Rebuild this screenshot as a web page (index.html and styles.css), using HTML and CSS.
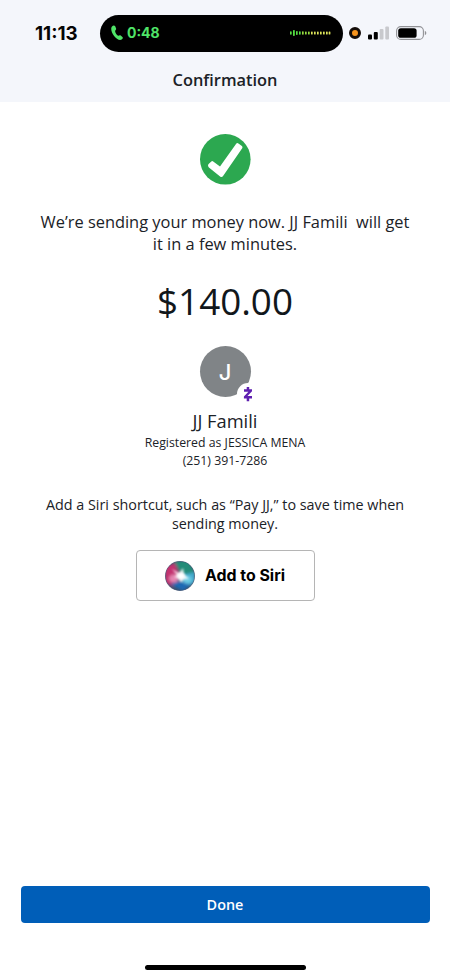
FILE: index.html
```html
<!DOCTYPE html>
<html lang="en">
<head>
<meta charset="utf-8">
<title>Confirmation</title>
<link rel="stylesheet" href="styles.css">
</head>
<body>
<header class="header">
  <div class="status">
    <span class="clock">11:13</span>
    <div class="island">
      <svg class="phone" width="12" height="16" viewBox="0 0 12 16"><path d="M1 1.4C2 .2 3.6.1 4.2 1.3L5.1 3.6C5.4 4.7 4.3 5.1 4.1 5.9C4.1 7.6 5.6 9.9 7.2 10.7C8 10.8 8.5 9.9 9.4 10.3L11.4 11.9C12.3 12.8 11.7 13.8 10.7 14.6C8.6 16 5.2 13.9 3.1 11.1C.7 8-.8 3.4 1 1.4Z"/></svg>
      <span class="duration">0:48</span>
      <svg class="wave" width="41" height="8" viewBox="0 0 41 8">
        <g fill="#55df42"><rect x="0" y="2.3" width="1.7" height="3.4" rx=".7"/><rect x="3" y="1" width="1.8" height="6" rx=".7"/><rect x="6" y="2" width="1.7" height="4" rx=".7"/><rect x="9" y="2.2" width="1.7" height="3.6" rx=".7"/></g>
        <g fill="#96dc40"><rect x="12" y="2.2" width="1.7" height="3.6" rx=".7"/><rect x="15" y="2.4" width="1.7" height="3.2" rx=".7"/><rect x="18" y="2.4" width="1.7" height="3.2" rx=".7"/></g>
        <g fill="#dce25a"><rect x="21" y="2.4" width="1.7" height="3.2" rx=".7"/><rect x="24" y="2.4" width="1.7" height="3.2" rx=".7"/><rect x="27" y="2.4" width="1.7" height="3.2" rx=".7"/><rect x="30" y="2.4" width="1.7" height="3.2" rx=".7"/><rect x="33" y="2.4" width="1.7" height="3.2" rx=".7"/><rect x="36" y="2.4" width="1.7" height="3.2" rx=".7"/><rect x="38.7" y="2.4" width="1.7" height="3.2" rx=".7"/></g>
      </svg>
    </div>
    <span class="mic"></span>
    <svg class="signal" width="21" height="14" viewBox="0 0 21 14"><rect x="0" y="8.6" width="4" height="5" rx="1"/><rect x="5.8" y="6" width="4" height="7.6" rx="1"/><rect x="11.7" y="3.1" width="3.8" height="10.5" rx="1" fill="#c8c9cd"/><rect x="17.3" y=".4" width="3.7" height="13.2" rx="1" fill="#c8c9cd"/></svg>
    <svg class="battery" width="31" height="14" viewBox="0 0 31 14"><rect x=".6" y=".6" width="26.8" height="12.8" rx="4.2" fill="none" stroke="#919296" stroke-width="1.1"/><rect x="2.2" y="2.2" width="18.4" height="9.6" rx="2.6"/><path d="M28.8 4.8Q30.4 5.5 30.4 7T28.8 9.2Z" fill="#919296"/></svg>
  </div>
  <h1 class="title">Confirmation</h1>
</header>
<main class="content">
  <svg class="check" width="51" height="51" viewBox="0 0 51 51"><circle cx="25.3" cy="25.3" r="25.3" fill="#2ca850"/><path d="M8.1 32.1Q7.7 31 8.6 30.1L11.3 27.5Q12.2 26.7 13.2 27.5L20 32.6L36 9.9Q37 8.6 38.4 9.4L41.9 11.9Q43 12.8 42.2 14.2L22.9 42.3Q21.8 43.7 20.4 42.7L8.9 33.4Q8.3 32.8 8.1 32.1Z" fill="#fff"/></svg>
  <p class="message">We’re sending your money now. JJ Famili&nbsp; will get<br>it in a few minutes.</p>
  <p class="amount">$140.00</p>
  <div class="avatar">
    <span class="initial">J</span>
    <svg class="zelle" width="22" height="22" viewBox="0 0 22 22"><circle cx="11" cy="11" r="11" fill="#fff"/><path d="M7 6.2H15V8.3L10.5 13.1H15V15.6H12.2V18.2H9.7V15.6H6.9V13.5L11.4 8.7H7V6.2ZM9.7 3.9H12.2V7H9.7Z" fill="#5e1fb0"/></svg>
  </div>
  <h2 class="name">JJ Famili</h2>
  <p class="registered">Registered as JESSICA MENA</p>
  <p class="number">(251) 391-7286</p>
  <p class="hint">Add a Siri shortcut, such as “Pay JJ,” to save time when<br>sending money.</p>
  <button class="siri">
    <svg class="orb" width="30" height="30" viewBox="0 0 30 30">
      <defs>
        <clipPath id="ball"><circle cx="15" cy="15" r="14.4"/></clipPath>
        <filter id="soft" x="-50%" y="-50%" width="200%" height="200%"><feGaussianBlur stdDeviation="1.8"/></filter>
        <filter id="glow" x="-50%" y="-50%" width="200%" height="200%"><feGaussianBlur stdDeviation="1.1"/></filter>
      </defs>
      <circle cx="15" cy="15" r="15" fill="#68738a"/>
      <g clip-path="url(#ball)">
        <rect width="30" height="30" fill="#38516f"/>
        <g filter="url(#soft)"><path d="M0 5L10 2L15 15L8 26L0 22Z" fill="#c33370"/><path d="M9 0H24L30 12L17 14Z" fill="#238c78"/><path d="M17 14L30 11V21L23 26Z" fill="#42aace"/><path d="M5 23L16 20L25 24L18 30Z" fill="#1c69b4"/><ellipse cx="9" cy="17.5" rx="5" ry="4" fill="#e487b2"/><ellipse cx="22" cy="18.5" rx="5" ry="4" fill="#6ccbe4"/></g>
        <path d="M7 8L14 12L18 7L19 13L24 18L19 18L16 22L13 17L9 16L12 14Z" fill="#fff" opacity=".85" filter="url(#glow)"/>
        <ellipse cx="16" cy="15" rx="3.5" ry="3" fill="#fff" filter="url(#glow)"/>
      </g>
    </svg>
    <span class="siri-label">Add to Siri</span>
  </button>
</main>
<footer class="footer">
  <button class="done">Done</button>
  <div class="home"></div>
</footer>
</body>
</html>
```
FILE: styles.css
```css
* { box-sizing: border-box; }
body {
  margin: 0;
  height: 978px;
  display: flex;
  flex-direction: column;
  overflow: hidden;
  background: #fff;
  color: #1b2227;
  font-family: "Open Sans", sans-serif;
}
h1, h2, p { margin: 0; font-weight: 400; white-space: nowrap; }
svg { display: block; flex: none; }
button { font: inherit; padding: 0; }
.header { height: 102px; background: #f4f6fb; flex: none; }
.status { height: 66px; padding-left: 34px; display: flex; align-items: center; }
.clock {
  width: 66px;
  padding: 2px 0 0 1px;
  font: 700 18.8px/20px Inter, sans-serif;
  color: #050505;
}
.island {
  width: 243px;
  height: 37px;
  border-radius: 19px;
  background: #000;
  display: flex;
  align-items: center;
  padding: 0 12px 0 11px;
}
.phone { fill: #4fe468; }
.duration {
  margin-left: 4px;
  font: 700 14px/18px Inter, sans-serif;
  color: #4fe468;
}
.wave { margin-left: auto; }
.mic {
  width: 12px;
  height: 12px;
  border: 3px solid #130c08;
  border-radius: 50%;
  background: #f7941d;
  margin-left: 6px;
}
.signal { margin-left: 7px; }
.battery { margin-left: 7px; }
.title {
  text-align: center;
  font-size: 16.4px;
  line-height: 28px;
  font-weight: 600;
}
.content { display: flex; flex-direction: column; align-items: center; padding-top: 32px; text-align: center; }
.message { margin-top: 26px; font-size: 16.4px; line-height: 22px; }
.amount { margin-top: 20px; font-size: 36.8px; line-height: 52px; color: #11171b; }
.avatar {
  position: relative;
  width: 51px;
  height: 51px;
  margin-top: 19px;
  border-radius: 50%;
  background: #808487;
  display: flex;
  align-items: center;
  justify-content: center;
}
.initial { font: 500 22px/26px Inter, sans-serif; color: #fff; }
.zelle { position: absolute; left: 37px; top: 37px; }
.name { margin-top: 11px; font-size: 18.3px; line-height: 26px; }
.registered, .number { font-size: 12.3px; line-height: 18px; }
.hint { margin-top: 25px; font-size: 14.35px; line-height: 19px; }
.siri {
  width: 179px;
  height: 51px;
  margin-top: 17px;
  border: 1px solid #b5b5b5;
  border-radius: 4px;
  background: #fff;
  display: flex;
  align-items: center;
  justify-content: center;
  gap: 10px;
  color: #000;
  font: 700 15.9px/20px Inter, sans-serif;
}
.siri-label { padding-top: 1px; }
.footer { margin-top: auto; padding: 0 20px 8px; display: flex; flex-direction: column; align-items: center; }
.done {
  width: 409px;
  height: 37px;
  padding-bottom: 1px;
  border: 0;
  border-radius: 4px;
  background: #005eb8;
  color: #fff;
  font-size: 14.4px;
  font-weight: 600;
}
.home { width: 161px; height: 5px; border-radius: 3px; background: #000; margin-top: 42px; }
```
